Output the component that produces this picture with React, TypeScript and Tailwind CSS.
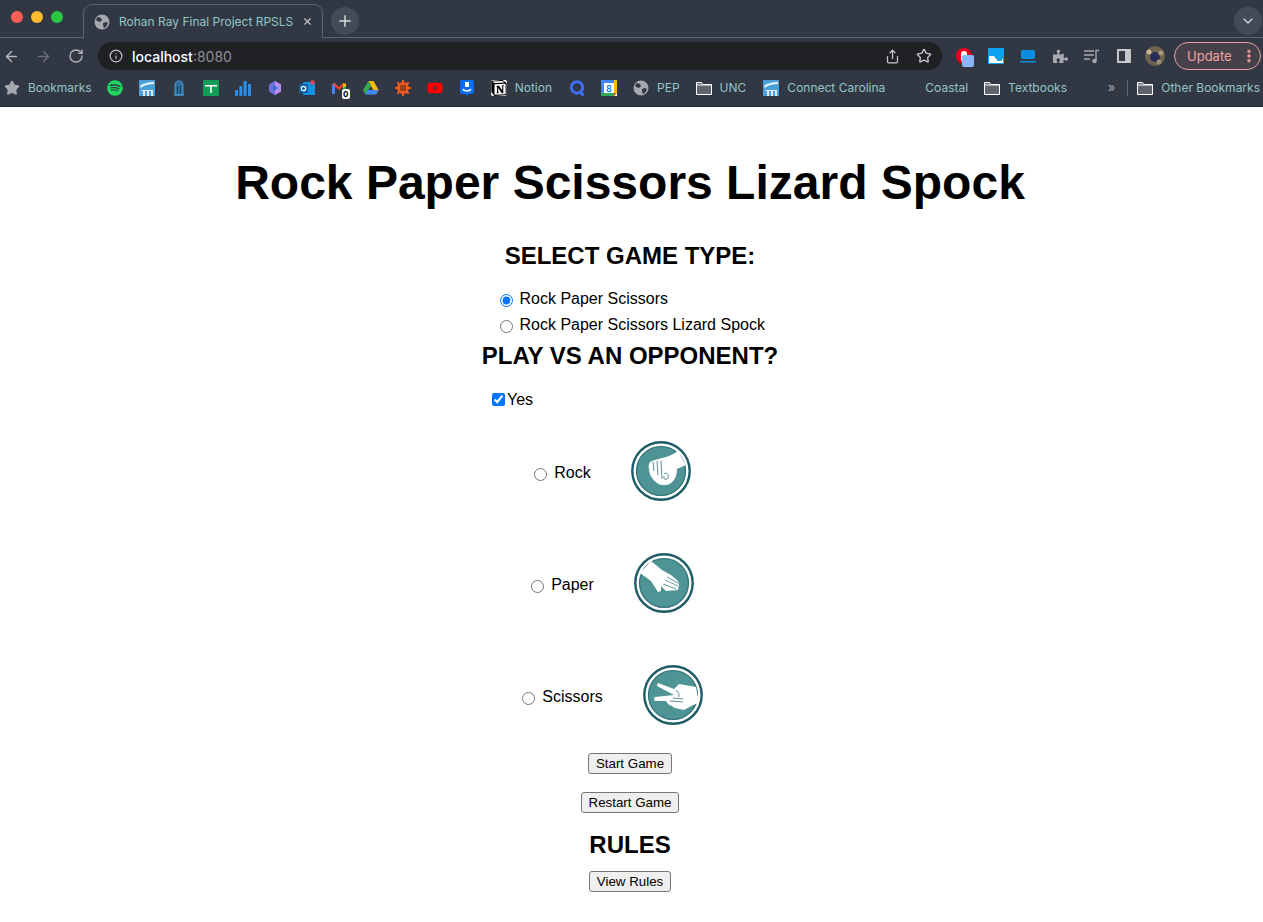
import React from 'react';
import { FaSpotify, FaYoutube, FaPuzzlePiece } from 'react-icons/fa';
import { SiNotion } from 'react-icons/si';
import { ArrowLeft, ArrowRight, RotateCw, Info, Share, Star, ChevronDown, Plus, X, EllipsisVertical } from 'lucide-react';

function Globe() {
  return (
    <svg viewBox="0 0 16 16" className="w-4 h-4">
      <circle cx="8" cy="8" r="7.5" fill="#a5a8ad" />
      <path d="M4 3l3 1 1 2-2 2-3-1-1-2zM9 9l3-1 2 1-2 4-2 1-1-3z" fill="#323843" />
    </svg>
  );
}

function Folder() {
  return (
    <svg viewBox="0 0 16 16" className="w-4 h-4">
      <path d="M.5 2.5h5l1.5 2h8.5v10H.5z" fill="#5f646c" stroke="#fff" strokeWidth="1" />
      <path d="M.5 5h15" stroke="#fff" strokeWidth="1" />
    </svg>
  );
}

function Unc() {
  return (
    <svg viewBox="0 0 16 16" className="w-4 h-4">
      <rect width="16" height="16" fill="#4a9fd8" />
      <path d="M1 6c3-3 9-4 14-4v2C10 4 5 5 2 8z" fill="#e6f2fa" />
      <path d="M2 10h12v1H2zM4 11h2v5H4zM8 11h2v5H8zM12 11h2v5h-2z" fill="#dcecf7" />
    </svg>
  );
}

function Bookmark({ icon, label }: { icon?: React.ReactNode; label?: string }) {
  return (
    <div className="flex items-center gap-2 px-2 h-full shrink-0">
      <span className="w-4 h-4 flex items-center justify-center">{icon}</span>
      {label && <span>{label}</span>}
    </div>
  );
}

function BookmarksBar() {
  return (
    <div className="flex items-center h-[37px] pl-1 text-[12px] text-[#93c4c8] border-b border-[#23272e] overflow-hidden">
      <div className="flex items-center gap-2 pr-[7px] shrink-0">
        <Star className="w-4 h-4 text-[#a5a8ad] fill-[#a5a8ad]" />
        <span>Bookmarks</span>
      </div>
      <Bookmark icon={<FaSpotify className="w-4 h-4 text-[#1ed760]" />} />
      <Bookmark icon={<Unc />} />
      <Bookmark
        icon={
          <svg viewBox="0 0 16 16" className="w-4 h-4">
            <path d="M4 15V5c0-3 2-4 4-4s4 1 4 4v10zM3 15h10" fill="#2a6f9e" stroke="#4b9cd3" />
            <path d="M6.5 6v8M9.5 6v8" stroke="#16415f" />
          </svg>
        }
      />
      <Bookmark
        icon={
          <svg viewBox="0 0 16 16" className="w-4 h-4">
            <rect width="16" height="16" rx="1" fill="#0f9d58" />
            <path d="M2 5h12v1.5H8.8V13H7.2V6.5H2z" fill="#fff" />
          </svg>
        }
      />
      <Bookmark
        icon={
          <svg viewBox="0 0 16 16" className="w-4 h-4" fill="#2f8fe8">
            <rect x="0" y="10" width="3" height="6" rx="1" />
            <rect x="4.3" y="6" width="3" height="10" rx="1" />
            <rect x="8.6" y="1" width="3" height="15" rx="1" />
            <rect x="13" y="4" width="3" height="12" rx="1" />
          </svg>
        }
      />
      <Bookmark
        icon={
          <svg viewBox="0 0 16 16" className="w-4 h-4">
            <path d="M8 1l6 3.5v7L8 15l-6-3.5v-7z" fill="#7a6fe0" />
            <path d="M8 1l6 3.5v7L8 15z" fill="#b58ce8" />
            <path d="M6 5l5 3-5 3z" fill="#2f6fd8" />
          </svg>
        }
      />
      <Bookmark
        icon={
          <svg viewBox="0 0 16 16" className="w-4 h-4">
            <rect x="4" y="2" width="12" height="13" fill="#1490df" />
            <circle cx="13.5" cy="2.5" r="2.2" fill="#e0455c" />
            <rect x="0" y="4" width="9" height="9" rx="1" fill="#0a5fa8" />
            <circle cx="4.5" cy="8.5" r="2.2" fill="none" stroke="#fff" strokeWidth="1.3" />
          </svg>
        }
      />
      <div className="relative flex items-center px-2 shrink-0">
        <svg viewBox="0 0 16 16" className="w-4 h-4">
          <path d="M1 14V4l3-1v11z" fill="#4285f4" />
          <path d="M15 14V4l-3-1v11z" fill="#34a853" />
          <path d="M1 4l3-1 4 4 4-4 3 1-7 6z" fill="#ea4335" />
          <path d="M12 3l3 1v2l-3 2z" fill="#fbbc04" />
        </svg>
        <span className="absolute right-[5px] bottom-[-3px] w-[8px] h-[10px] bg-white text-black text-[8px] leading-[10px] text-center font-bold rounded-[2px]">0</span>
      </div>
      <Bookmark
        icon={
          <svg viewBox="0 0 16 16" className="w-4 h-4">
            <path d="M5.5 1h5l5 9-2.5 4.5L8 6z" fill="#fbbc04" />
            <path d="M5.5 1L0 10l2.5 4.5L8 6z" fill="#34a853" />
            <path d="M2.5 14.5h10.5L15.5 10H5z" fill="#4285f4" />
          </svg>
        }
      />
      <Bookmark
        icon={
          <svg viewBox="0 0 16 16" className="w-4 h-4">
            <circle cx="8" cy="8" r="6" fill="#f4581c" />
            <path d="M8 0v16M0 8h16M2.3 2.3l11.4 11.4M13.7 2.3L2.3 13.7" stroke="#f4581c" strokeWidth="2" />
            <path d="M5 6h6M5 8h6M5 10h6" stroke="#32261f" strokeWidth="1" />
          </svg>
        }
      />
      <Bookmark icon={<FaYoutube className="w-4 h-4 text-[#ff0000]" />} />
      <Bookmark
        icon={
          <svg viewBox="0 0 16 16" className="w-4 h-4">
            <path d="M3 0h10a2 2 0 012 2v10a2 2 0 01-2 2H9.5L8 16l-1.5-2H3a2 2 0 01-2-2V2a2 2 0 012-2z" fill="#0b6ef2" />
            <rect x="6" y="2" width="4" height="5" fill="#fff" />
            <path d="M4 9c1 2.5 7 2.5 8 0" stroke="#fff" strokeWidth="1.4" fill="none" />
          </svg>
        }
      />
      <Bookmark icon={<span className="w-4 h-4 bg-white rounded-[2px] flex items-center justify-center"><SiNotion className="w-4 h-4 text-black" /></span>} label="Notion" />
      <span className="w-px shrink-0" />
      <Bookmark
        icon={
          <svg viewBox="0 0 16 16" className="w-4 h-4">
            <circle cx="8" cy="7.5" r="5.7" fill="none" stroke="#3d6ef5" strokeWidth="3" />
            <path d="M10.5 11l4 4.5" stroke="#3d6ef5" strokeWidth="3" />
          </svg>
        }
      />
      <Bookmark
        icon={
          <svg viewBox="0 0 16 16" className="w-4 h-4">
            <rect width="16" height="16" fill="#fff" />
            <rect width="16" height="3" fill="#4285f4" />
            <rect width="3" height="16" fill="#4285f4" />
            <rect x="13" width="3" height="13" fill="#fbbc04" />
            <rect y="13" width="13" height="3" fill="#34a853" />
            <path d="M13 13h3l-3 3z" fill="#ea4335" />
            <text x="8" y="12" fontSize="9" textAnchor="middle" fill="#1a73e8" fontFamily="Inter, sans-serif" fontWeight="600">8</text>
          </svg>
        }
      />
      <Bookmark icon={<Globe />} label="PEP" />
      <Bookmark icon={<Folder />} label="UNC" />
      <span className="w-px shrink-0" />
      <Bookmark icon={<Unc />} label="Connect Carolina" />
      <Bookmark label="Coastal" />
      <Bookmark icon={<Folder />} label="Textbooks" />
      <span className="ml-auto text-[#a5a8ad] text-[13px] mr-[12px]">»</span>
      <span className="w-px h-4 bg-[#5f646c] mr-[1px] shrink-0" />
      <div className="-mr-[5px] shrink-0">
        <Bookmark icon={<Folder />} label="Other Bookmarks" />
      </div>
    </div>
  );
}

function ToolbarIcons() {
  return (
    <div className="flex items-center ml-[6px] shrink-0">
      <div className="relative w-[32px] h-4 flex justify-center">
        <span className="w-[16px] h-[16px] rounded-full bg-[#e8001c] flex items-center justify-center">
          <span className="w-[6px] h-[11px] bg-white rounded-full" />
        </span>
        <span className="absolute left-[14px] top-[7px] w-3 h-3 bg-[#8ab4f8] rounded-[2px]" />
      </div>
      <div className="w-[32px] flex justify-center">
        <svg viewBox="0 0 16 16" className="w-4 h-4">
          <rect width="16" height="16" fill="#0aa2ee" />
          <path d="M1 8h5l2 3h7v4H1z" fill="#fff" />
          <path d="M9 9l5-1v5H9z" fill="#0aa2ee" />
        </svg>
      </div>
      <div className="w-[32px] flex justify-center">
        <svg viewBox="0 0 16 16" className="w-4 h-4" fill="#0a8fe0">
          <rect x="1" y="2" width="14" height="9" rx="2" />
          <rect x="0" y="13" width="16" height="1.5" />
        </svg>
      </div>
      <div className="w-[32px] flex justify-center">
        <FaPuzzlePiece className="w-[15px] h-[15px] text-[#a5a8ad]" />
      </div>
      <div className="w-[32px] flex justify-center">
        <svg viewBox="0 0 16 16" className="w-4 h-4" fill="none" stroke="#a5a8ad" strokeWidth="1.4">
          <path d="M0 3h10M0 7h10M0 11h6" />
          <path d="M12 13V2.5h3" />
          <circle cx="10.5" cy="13" r="1.5" fill="#a5a8ad" />
        </svg>
      </div>
      <div className="w-[32px] flex justify-center">
        <svg viewBox="0 0 14 14" className="w-[14px] h-[14px]">
          <rect x="1" y="1" width="12" height="12" fill="none" stroke="#c4c7cc" strokeWidth="2" />
          <rect x="8" y="1" width="5" height="12" fill="#c4c7cc" />
        </svg>
      </div>
      <div className="w-[30px] flex justify-center">
        <svg viewBox="0 0 20 20" className="w-5 h-5">
          <circle cx="10" cy="10" r="10" fill="#6d6350" />
          <circle cx="10" cy="11" r="5" fill="#2a2d55" />
          <circle cx="4" cy="6" r="2.5" fill="#c8b88e" />
          <circle cx="16" cy="7" r="2.5" fill="#a89a78" />
          <circle cx="14" cy="16" r="2.5" fill="#9a8f7a" />
        </svg>
      </div>
    </div>
  );
}

function Browser() {
  return (
    <div className="bg-[#323843] font-['Inter',sans-serif]">
      <div className="flex items-end h-[38px] border-b border-[#5f646c] pl-[11px]">
        <div className="flex gap-[8px] self-start mt-[11px] w-[72px]">
          <span className="w-3 h-3 rounded-full bg-[#ff5f57]" />
          <span className="w-3 h-3 rounded-full bg-[#febc2e]" />
          <span className="w-3 h-3 rounded-full bg-[#28c840]" />
        </div>
        <div className="flex items-center w-[240px] h-[34px] -mb-px bg-[#323843] border border-b-0 border-[#5f646c] rounded-t-[9px] pl-[10px] pr-[9px] text-[12px] text-[#93c4c8]">
          <Globe />
          <span className="ml-[9px] flex-1 whitespace-nowrap">Rohan Ray Final Project RPSLS</span>
          <X className="w-[11px] h-[11px] text-[#c4c7cc]" strokeWidth={2.5} />
        </div>
        <span className="self-start mt-[7px] ml-2 w-[28px] h-[28px] rounded-full bg-[#434b58] flex items-center justify-center">
          <Plus className="w-[18px] h-[18px] text-[#d5d7da]" />
        </span>
        <span className="self-start mt-[7px] ml-auto mr-[1px] w-[28px] h-[28px] rounded-full bg-[#434b58] flex items-center justify-center">
          <ChevronDown className="w-4 h-4 text-[#d5d7da]" />
        </span>
      </div>
      <div className="flex items-center h-[32px] pt-[4px] pl-[3px]">
        <ArrowLeft className="w-[17px] h-[17px] text-[#b4b7bc] shrink-0" />
        <ArrowRight className="w-[17px] h-[17px] ml-[15px] text-[#6a6f78] shrink-0" />
        <RotateCw className="w-[16px] h-[16px] ml-[16px] text-[#b4b7bc] shrink-0" />
        <div className="flex items-center w-[844px] h-[28px] ml-[14px] rounded-full bg-[#202124] pl-[11px] pr-[10px] text-[14px] shrink-0">
          <Info className="w-[14px] h-[14px] text-[#c4c7cc]" />
          <span className="ml-[9px] text-white font-medium">localhost</span>
          <span className="text-[#8b8e93]">:8080</span>
          <Share className="w-[15px] h-[15px] ml-auto text-[#c4c7cc]" />
          <Star className="w-[16px] h-[16px] ml-[16px] text-[#c4c7cc]" />
        </div>
        <ToolbarIcons />
        <div className="flex items-center w-[87px] h-[28px] ml-[4px] rounded-full border border-[#e8a0a0] bg-[#45404a] pl-3 text-[13px] text-[#f2a3a0] shrink-0">
          <span className="mt-[2px]">Update</span>
          <EllipsisVertical className="w-4 h-4 ml-auto mr-[3px]" strokeWidth={3} />
        </div>
      </div>
      <BookmarksBar />
    </div>
  );
}

function Badge({ children }: { children: React.ReactNode }) {
  return (
    <svg viewBox="0 0 60 60" className="w-[60px] h-[60px]">
      <circle cx="30" cy="30" r="28.7" fill="#fff" stroke="#1d5c66" strokeWidth="2.4" />
      <circle cx="30" cy="30" r="24.5" fill="#4f9494" stroke="#2c7076" strokeWidth="1.2" />
      {children}
    </svg>
  );
}

const moves = [
  {
    name: 'Rock',
    icon: (
      <Badge>
        <path d="M47 10L55 24L46 28C46 34 44 39 40 42C36 45 30 45 26 42C22 39 18 34 18 28C17 24 18 21 21 20C28 17 38 17 47 10Z" fill="#fff" />
        <path d="M22 21L23 30M26 20L27 34M30 20L31 38M33 33C35 31 38 33 37 37C35 40 32 38 33 35" fill="none" stroke="#1d5c66" strokeWidth="0.7" />
      </Badge>
    ),
  },
  {
    name: 'Paper',
    icon: (
      <Badge>
        <path d="M17 8L28 17L37 22L44 28L45 32L44 37L32 38L27 33L27 38L24 39L17 28L6 20Z" fill="#fff" />
        <path d="M33 24L44 30M31 27L44 33M29 31L42 36" fill="none" stroke="#4f9494" strokeWidth="0.9" />
      </Badge>
    ),
  },
  {
    name: 'Scissors',
    icon: (
      <Badge>
        <path d="M15 18L31 24L36 19L53 22L56 38L50 40L41 45L32 43L25 39L23 36L12 36Q10 34 12 32L31 30L14 21Q14 19 15 18Z" fill="#fff" />
        <path d="M33 25Q37 28 36 32M27 36L40 37M30 33L40 34" fill="none" stroke="#1d5c66" strokeWidth="0.7" />
      </Badge>
    ),
  },
];

function NativeButton({ label }: { label: string }) {
  return (
    <button className="h-[21px] px-[7px] bg-[#efefef] border border-[#767676] rounded-[3px] text-[13.33px] leading-none text-black">
      {label}
    </button>
  );
}

export default function App() {
  return (
    <div className="h-[922px] overflow-hidden bg-white">
      <Browser />
      <main className="flex flex-col pr-[3px] pt-[48px] font-['Liberation_Sans',Arial,sans-serif] text-black text-center">
        <h1 className="text-[48px] leading-[55px] font-bold">Rock Paper Scissors Lizard Spock</h1>
        <h2 className="mt-[32px] text-[24px] leading-[28px] font-bold">SELECT GAME TYPE:</h2>
        <div className="mt-[16px] ml-[500px] flex flex-col text-[16px] text-left">
          <label className="flex items-center gap-[6.5px] h-[26px]">
            <input type="radio" name="game" defaultChecked className="mt-[2px]" />
            Rock Paper Scissors
          </label>
          <label className="flex items-center gap-[6.5px] h-[26px]">
            <input type="radio" name="game" className="mt-[2px]" />
            Rock Paper Scissors Lizard Spock
          </label>
        </div>
        <h2 className="mt-[4px] text-[24px] leading-[28px] font-bold">PLAY VS AN OPPONENT?</h2>
        <label className="mt-[21px] ml-[492px] flex items-center gap-[2px] text-[16px] h-[18px]">
          <input type="checkbox" defaultChecked className="mb-[2px]" />
          Yes
        </label>
        <div className="mt-[8px] flex flex-col">
          {moves.map((m) => (
            <div key={m.name} className="flex items-center justify-center h-[112px] pr-[35px]">
              <input type="radio" name="move" className="mt-[3px]" />
              <span className="ml-[7px] text-[16px]">{m.name}</span>
              <span className="ml-[40px] mb-[4px]">{m.icon}</span>
            </div>
          ))}
        </div>
        <div className="flex flex-col items-center">
          <NativeButton label="Start Game" />
          <div className="mt-[16px]">
            <NativeButton label="Restart Game" />
          </div>
          <h2 className="mt-[17px] text-[24px] leading-[28px] font-bold">RULES</h2>
          <div className="mt-[10px]">
            <NativeButton label="View Rules" />
          </div>
        </div>
      </main>
    </div>
  );
}
